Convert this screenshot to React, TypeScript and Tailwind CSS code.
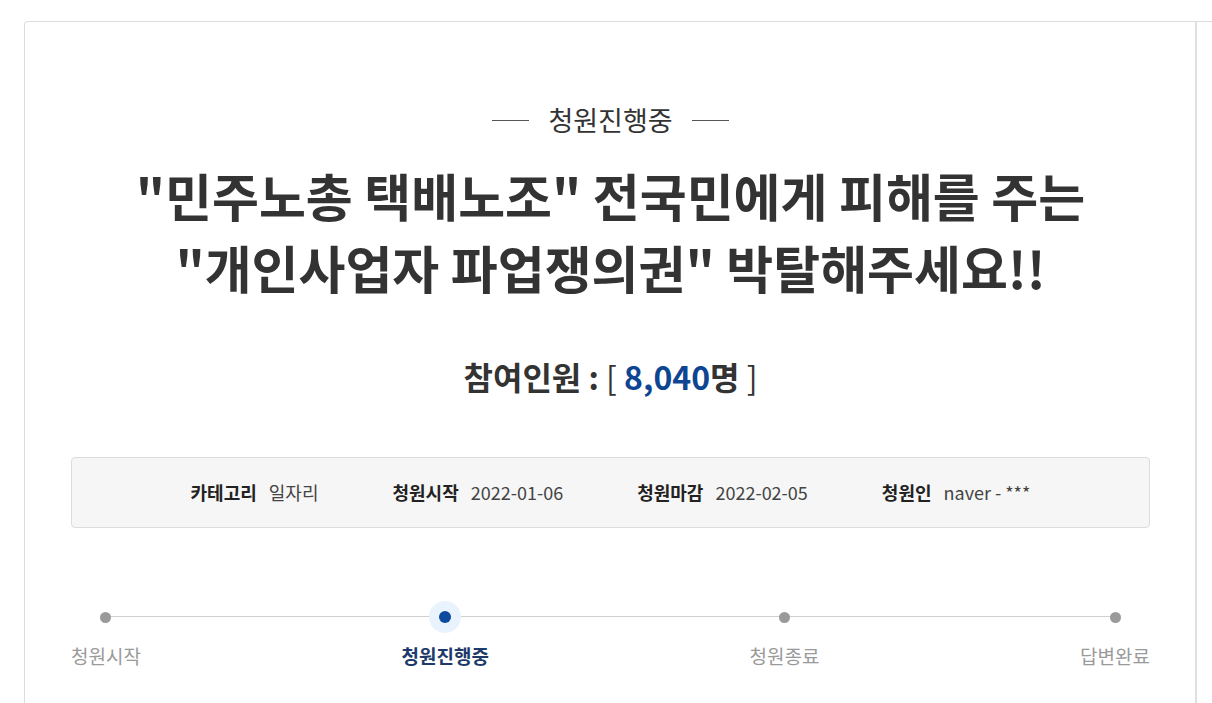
const font = {
  fontFamily: '"Noto Sans CJK KR", "Noto Sans", sans-serif',
};

const info = [
  { label: "카테고리", value: "일자리" },
  { label: "청원시작", value: "2022-01-06" },
  { label: "청원마감", value: "2022-02-05" },
  { label: "청원인", value: "naver - ***" },
];

const steps = [
  { name: "청원시작", active: false },
  { name: "청원진행중", active: true },
  { name: "청원종료", active: false },
  { name: "답변완료", active: false },
];

function ProgressSteps() {
  return (
    <div className="relative mt-[73px] flex justify-between">
      <div className="absolute left-[36px] right-[36px] top-[15px] h-px bg-[#cfcfcf]" />
      {steps.map((s) => (
        <div key={s.name} className="relative flex flex-col items-center">
          <div className="flex h-[32px] w-[32px] items-center justify-center">
            {s.active ? (
              <div className="flex h-[32px] w-[32px] items-center justify-center rounded-full bg-[#e9f3fd]">
                <div className="h-[12px] w-[12px] rounded-full bg-[#0b4a9c]" />
              </div>
            ) : (
              <div className="h-[11px] w-[11px] rounded-full bg-[#9a9a9a]" />
            )}
          </div>
          <span
            className={
              s.active
                ? "mt-[10px] text-[19px] leading-[26px] font-bold text-[#1d3a6b]"
                : "mt-[10px] text-[19px] leading-[26px] text-[#9a9a9a]"
            }
          >
            {s.name}
          </span>
        </div>
      ))}
    </div>
  );
}

export default function App() {
  return (
    <div className="min-h-[703px] overflow-hidden bg-white" style={font}>
      <div className="ml-[24px] mt-[21px] flex rounded-tl-[4px] border-l border-t border-[#dcdcdc]">
        <div className="w-[1170px] shrink-0 pl-[46px] pr-[45px] pt-[80px] pb-[40px]">
          <div className="flex items-center justify-center gap-[19px]">
            <span className="h-px w-[37px] bg-[#555]" />
            <span className="text-[27px] leading-[36px] text-[#333]">청원진행중</span>
            <span className="h-px w-[37px] bg-[#555]" />
          </div>

          <h1 className="mt-[21px] text-center text-[51px] leading-[72px] font-bold text-[#333]">
            "민주노총 택배노조" 전국민에게 피해를 주는
            <br />
            "개인사업자 파업쟁의권" 박탈해주세요!!
          </h1>

          <div className="mt-[53px] text-center text-[32px] leading-[40px] text-[#333]">
            <span className="font-bold">참여인원 :</span> [ <span className="font-bold text-[#0e4593]">8,040</span>
            <span className="font-bold">명</span> ]
          </div>

          <div className="mt-[61px] flex h-[71px] items-center justify-center gap-[74px] rounded-[4px] border border-[#dcdcdc] bg-[#f6f6f6]">
            {info.map((i) => (
              <div key={i.label} className="flex items-center gap-[12px] text-[18px]">
                <span className="font-bold text-[#222]">{i.label}</span>
                <span className="text-[#444]">{i.value}</span>
              </div>
            ))}
          </div>

          <ProgressSteps />
        </div>
        <div className="w-[2px] shrink-0 self-stretch bg-[#e0e0e0]" />
      </div>
    </div>
  );
}
